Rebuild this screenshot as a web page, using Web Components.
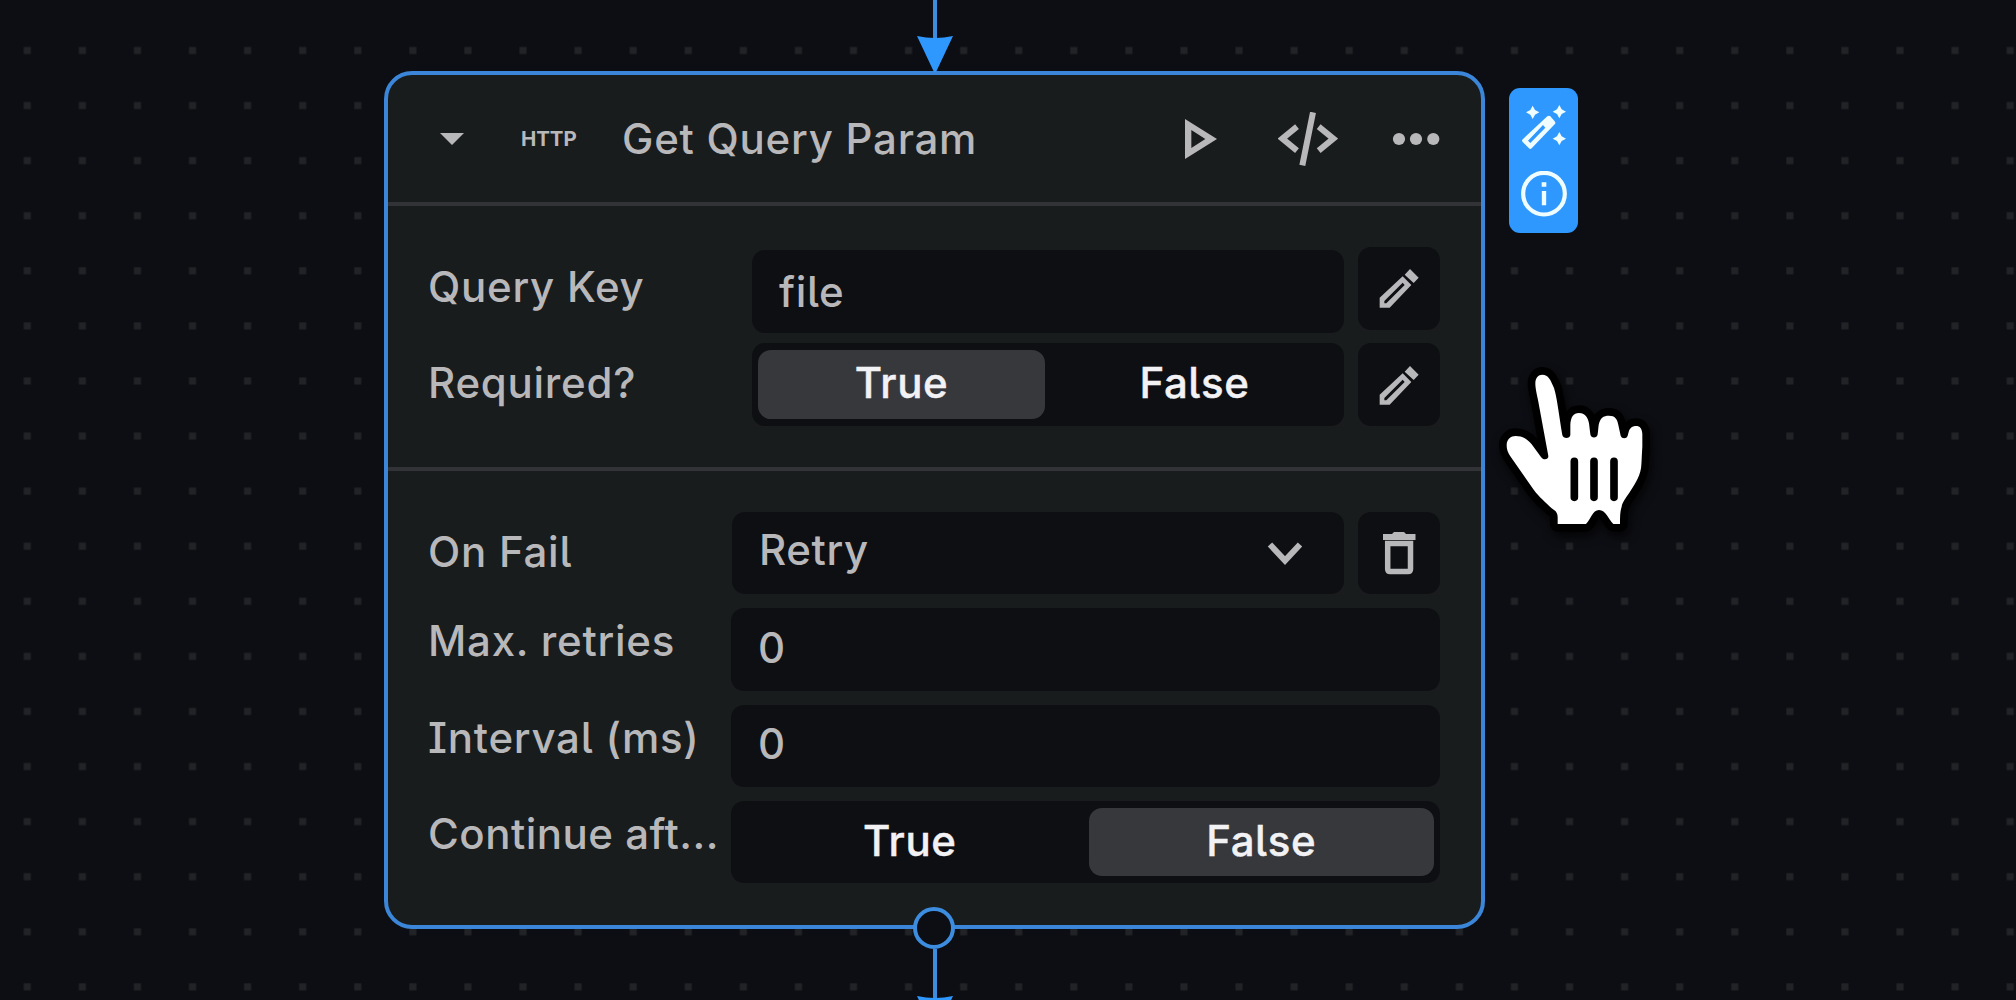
<!DOCTYPE html>
<html lang="en">
<head>
<meta charset="utf-8">
<title>Flow editor</title>
<style>
  body { margin: 0; width: 2016px; height: 1000px; overflow: hidden; background: #0d0e13; font-family: Inter, "Liberation Sans", sans-serif; }
</style>
</head>
<body>
<flow-canvas>
  <flow-edge style="left:914px;top:0;--len:38px"></flow-edge>
  <flow-node>
    <node-header slot="header" tag="HTTP">Get Query Param</node-header>
    <node-section>
      <field-row label="Query Key" style="--label-h:79px"><text-field style="width:592px;margin-top:3px;--shift:1px">file</text-field><icon-button icon="edit"></icon-button></field-row>
      <field-row label="Required?" style="--label-h:79px"><toggle-field value="True" style="width:592px"></toggle-field><icon-button icon="edit"></icon-button></field-row>
    </node-section>
    <node-section>
      <field-row label="On Fail" style="--label-h:79px"><select-field style="width:612px">Retry</select-field><icon-button icon="trash"></icon-button></field-row>
      <field-row label="Max. retries"><text-field style="width:709px;--shift:-2px">0</text-field></field-row>
      <field-row label="Interval (ms)"><text-field style="width:709px;--shift:-2px">0</text-field></field-row>
      <field-row label="Continue aft..." style="--label-ls:0.5px"><toggle-field value="False" style="width:709px"></toggle-field></field-row>
    </node-section>
  </flow-node>
  <flow-edge style="left:914px;top:949px;--len:49px"></flow-edge>
  <flow-port></flow-port>
  <node-toolbar></node-toolbar>
  <hand-cursor></hand-cursor>
</flow-canvas>
<script>
const define = (name, render) => customElements.define(name, class extends HTMLElement {
  connectedCallback() {
    if (!this.shadowRoot) this.attachShadow({ mode: "open" }).innerHTML = render(this);
  }
});

define("flow-canvas", () => `
<style>
  :host { display: block; position: relative; width: 2016px; height: 1000px; overflow: hidden; background: #0d0e13; }
  .grid { display: block; width: 100%; height: 100%; }
</style>
<svg class="grid"><defs><pattern id="d" x="-.2" y="23" width="55.08" height="55.08" patternUnits="userSpaceOnUse"><rect x="24" y="24" width="7" height="7" fill="#222327"/></pattern></defs><rect width="2016" height="1000" fill="url(#d)"/></svg>
<slot></slot>`);

define("flow-edge", () => `
<style>
  :host { position: absolute; display: flex; flex-direction: column; align-items: center; width: 41px; z-index: 2; }
  i { width: 4px; height: var(--len); background: #3c8ce0; }
  svg { margin-top: -2px; }
</style>
<i></i><svg width="36" height="37" viewBox="0 0 36 37"><path d="M0 0 Q18 4 36 0 L19.5 35 Q18 37.5 16.5 35Z" fill="#2f98ff"/></svg>`);

define("flow-node", () => `
<style>
  :host { position: absolute; left: 384px; top: 71px; width: 1101px; height: 858px; box-sizing: border-box; border: 4px solid #3b86d8; border-radius: 28px; background: #191c1d; display: flex; flex-direction: column; color: #b8b8bb; }
</style>
<slot name="header"></slot><slot></slot>`);

define("node-header", el => `
<style>
  :host { display: flex; flex: none; align-items: center; height: 127px; }
  svg { display: block; flex: none; fill: currentColor; }
  .caret { margin-left: 52px; }
  .tag { margin-left: 57px; width: 56px; font: 700 20.5px/30px Inter, "Liberation Sans", sans-serif; letter-spacing: -0.1px; white-space: nowrap; }
  .title { margin-left: 45px; flex: 1; font: 500 42px/60px Inter, "Liberation Sans", sans-serif; letter-spacing: 0.75px; white-space: nowrap; font-feature-settings: "cv05","cv08"; }
  .acts { display: flex; align-items: center; padding-right: 41px; }
  .code { margin-left: 61px; }
  .more { margin-left: 54px; }
</style>
<svg class="caret" width="24" height="12" viewBox="0 0 24 12"><path d="M0 0H24L12 12Z"/></svg>
<span class="tag">${el.getAttribute("tag")}</span>
<span class="title"><slot></slot></span>
<div class="acts">
  <svg width="32" height="40" viewBox="0 0 96 120"><path fill-rule="evenodd" d="M0 0L96 60L0 120ZM19 33V87L61 60Z"/></svg>
  <svg class="code" width="60" height="54" viewBox="0 0 180 162"><g fill="none" stroke="currentColor" stroke-width="18"><path d="M57 44L13 80L57 116M122 44L166 80L122 116M105 1L73 160"/></g></svg>
  <svg class="more" width="48" height="14" viewBox="0 0 48 14"><circle cx="7" cy="7" r="6.1"/><circle cx="24" cy="7" r="6.1"/><circle cx="41.300" cy="7" r="6.1"/></svg>
</div>`);

define("node-section", () => `
<style>
  :host { display: flex; flex: none; flex-direction: column; gap: 13.8px; border-top: 4px solid #323337; padding: 41px 41px 41.2px 40px; }
</style><slot></slot>`);

define("field-row", el => `
<style>
  :host { display: flex; align-items: flex-start; height: 82.5px; }
  .label { flex: 1; min-width: 0; font: 500 42px/var(--label-h, 66px) Inter, "Liberation Sans", sans-serif; letter-spacing: var(--label-ls, 0.75px); white-space: nowrap; font-feature-settings: "cv05","cv08"; }
  .controls { display: flex; flex: none; gap: 14px; align-items: flex-start; }
</style>
<span class="label">${el.getAttribute("label")}</span><div class="controls"><slot></slot></div>`);

const box = `display: flex; box-sizing: border-box; height: 82.5px; border-radius: 13px; background: #0e0f13;`;

define("text-field", () => `
<style>
  :host { ${box} align-items: center; padding-left: 27px; }
  span { position: relative; top: var(--shift, 0); font: 500 42px/60px Inter, "Liberation Sans", sans-serif; letter-spacing: 0.7px; font-feature-settings: "cv05"; }
</style><span><slot></slot></span>`);

define("select-field", () => `
<style>
  :host { ${box} align-items: center; justify-content: space-between; padding: 0 41px 0 27px; }
  span { font: 500 42px/60px Inter, "Liberation Sans", sans-serif; letter-spacing: 0.6px; margin-bottom: 6px; }
</style><span><slot></slot></span>
<svg width="36" height="24" viewBox="0 0 36 24"><path d="M3 3.500L18 19.500L33 3.500" fill="none" stroke="currentColor" stroke-width="6"/></svg>`);

define("toggle-field", el => `
<style>
  :host { ${box} padding: 7px 6px; gap: 6px; }
  span { flex: 1; display: block; border-radius: 13px; text-align: center; color: #f2f2f5; font: 500 42px/66px Inter, "Liberation Sans", sans-serif; letter-spacing: 0.6px; font-feature-settings: "cv05"; -webkit-text-stroke: 0.4px currentColor; }
  .on { background: #37383b; }
</style>
${["True", "False"].map(v => `<span class="${el.getAttribute("value") === v ? "on" : ""}">${v}</span>`).join("")}`);

const icons = {
  edit: `<svg width="82" height="82" viewBox="0 0 246 246"><path fill="currentColor" fill-rule="evenodd" d="M156 66L182 92L167 108L140 83ZM134 88L160 114L95 182H65V152ZM79 162V169H85L140 114L134 107Z"/></svg>`,
  trash: `<svg width="82" height="82" viewBox="0 0 82 82"><path fill="currentColor" d="M25 22H34L36 20H46L48 22H57.500V28H25Z"/><path d="M29.700 31.500V57Q29.700 59.500 32.200 59.500H50Q52.500 59.500 52.500 57V31.500Z" fill="none" stroke="currentColor" stroke-width="5.500"/></svg>`
};
define("icon-button", el => `
<style>
  :host { ${box} width: 82px; align-items: center; justify-content: center; }
  svg { display: block; }
</style>${icons[el.getAttribute("icon")]}`);

define("flow-port", () => `
<style>
  :host { position: absolute; left: 913px; top: 907px; width: 42px; height: 42px; box-sizing: border-box; border: 4px solid #3c8ce0; border-radius: 50%; background: #0d0e13; z-index: 3; }
</style>`);

const star = (x, y) => `<path d="M${x} ${y - 20}L${x + 7} ${y - 7}L${x + 20} ${y}L${x + 7} ${y + 7}L${x} ${y + 20}L${x - 7} ${y + 7}L${x - 20} ${y}L${x - 7} ${y - 7}Z"/>`;
define("node-toolbar", () => `
<style>
  :host { position: absolute; left: 1509px; top: 88px; width: 69px; height: 145px; border-radius: 11px; background: #2f98ff; display: flex; flex-direction: column; align-items: center; justify-content: center; gap: 20px; }
  svg { display: block; }
</style>
<svg width="46" height="46" viewBox="0 0 138 138"><g fill="#effdff">${star(35, 22)}${star(115, 20)}${star(115, 101)}<path fill-rule="evenodd" d="M79 34Q84 30 88 34L101 49Q105 54 101 58L32 130Q28 134 24 130L5 111Q1 106 6 102ZM21 107L28 114L73 68L66 60Z"/></g></svg>
<svg width="46" height="46" viewBox="0 0 138 138"><circle cx="69" cy="68" r="62.500" fill="none" stroke="#effdff" stroke-width="12.500"/><path fill="#effdff" d="M62 34H76V47H62ZM62.500 60H75.500V103H62.500Z"/></svg>`);

define("hand-cursor", () => `
<style>
  :host { position: absolute; left: 1480px; top: 350px; z-index: 4; }
  svg { display: block; overflow: visible; filter: drop-shadow(2px 5px 5px rgba(0,0,0,.7)); }
</style>
<svg width="190" height="200" viewBox="0 0 570 600">
  <path fill="#fff" stroke="#000" stroke-width="46" stroke-linejoin="round" paint-order="stroke" d="M205 318L175 155C170 130 166 115 166 100C166 84 175 74 187 74C205 74 212 90 222 114C230 140 233 165 247 255C249 267 270 267 271 255V225C272 202 280 189 297 189C315 189 324 202 327 220L331 253C333 266 351 266 353 253L356 225C360 204 370 197 387 197C405 197 412 207 415 225L422 257C425 267 440 267 443 257L447 242C452 231 460 228 468 228C480 228 486 236 487 252V290C485 320 485 345 483 355C478 385 460 410 449 427C436 446 427 458 425 470C420 484 420 500 420 522H400C385 508 378 480 357 480C337 480 333 508 318 522H233V502C233 484 223 482 215 475C195 455 180 445 160 418L92 320C84 308 80 300 80 284C81 268 92 258 107 258C128 258 143 268 155 283L183 321C190 332 206 329 205 318Z"/>
  <path stroke="#000" stroke-width="23" stroke-linecap="round" d="M283 334V442M342 334V442M402 334V442"/>
</svg>`);
</script>
</body>
</html>
